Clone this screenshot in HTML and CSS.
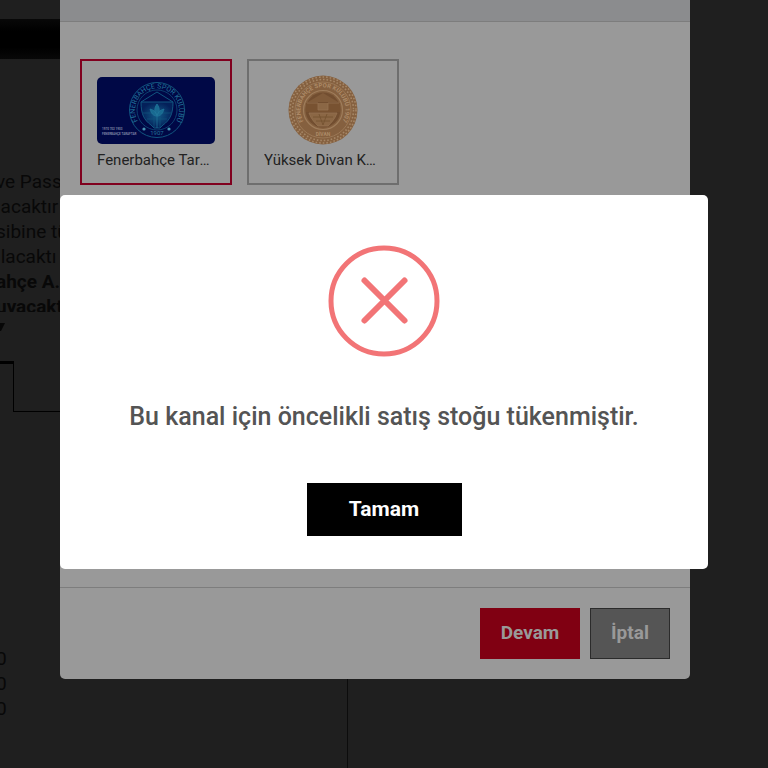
FILE: index.html
```html
<!DOCTYPE html>
<html lang="tr">
<head>
<meta charset="utf-8">
<meta name="viewport" content="width=device-width, initial-scale=1">
<title>Fenerbahçe Kart</title>
<link rel="stylesheet" href="styles.css">
</head>
<body>
<main class="page">
  <div class="page-bar"></div>
  <div class="page-text">
    <p>ve Pass<br>lacaktır<br>sibine tü<br>ılacaktı<br><b>ahçe A.<br>uyacakt</b></p>
  </div>
  <div class="page-tabs">
    <svg class="caret" width="6" height="10" viewBox="0 0 6 10"><path d="M0 1h5L1 9H0z" fill="#070707"/></svg>
    <div class="tab-row"><div class="tab-active"></div><div class="tab-rest"></div></div>
  </div>
  <div class="page-columns">
    <div class="values">0<br>0<br>0</div>
  </div>
</main>

<section class="modal" aria-label="Kart seçimi">
  <header class="modal-head"></header>
  <div class="modal-body">
    <button class="card selected" type="button">
      <svg class="card-art" viewBox="0 0 118 67">
        <defs>
          <path id="ringTop" d="M44 48.500A22 22 0 1 1 76 48.500"/>
          <radialGradient id="glow"><stop offset="0" stop-color="#125c88"/><stop offset="1" stop-color="#04205a"/></radialGradient>
        </defs>
        <rect width="118" height="67" rx="5" fill="#000846"/>
        <g fill="none" stroke="#115680">
          <circle cx="60" cy="33" r="27.500"/>
          <circle cx="60" cy="33" r="20" stroke-width=".7"/>
          <path d="M44 25L60 15L76 25"/>
          <path d="M44 25h32c0 12-3 18-10 23l-3 3h-6l-3-3c-7-5-10-11-10-23z" fill="url(#glow)"/>
          <path d="M46 36h28M50 42h20M57 40v10M63 40v10" stroke-width=".7"/>
          <path d="M60 27c3 4 3 8 0 11c-3-3-3-7 0-11zM60 39c-4 0-6-3-7-7c4 1 6 3 7 7c1-4 3-6 7-7c-1 4-3 7-7 7zM60 39v12" stroke="#22789c" fill="#196a91" stroke-width=".7"/>
        </g>
        <g fill="#22749a" font-family="Roboto, sans-serif" font-size="7">
          <text><textPath href="#ringTop" startOffset="50%" text-anchor="middle">FENERBAHÇE SPOR KULÜBÜ</textPath></text>
          <text x="60" y="58" text-anchor="middle" font-size="6">1907</text>
        </g>
        <circle cx="47" cy="52" r="1.600" fill="#4694b3"/><circle cx="72" cy="52" r="1.600" fill="#4694b3"/>
        <g fill="#7f83a4" font-family="Roboto, sans-serif" font-weight="700" font-size="3">
          <text x="5" y="53">1970 702 1903</text><text x="5" y="58">FENERBAHÇE TARAFTAR</text>
        </g>
      </svg>
      <span class="card-name">Fenerbahçe Taraftar Kart</span>
    </button>
    <button class="card" type="button">
      <svg class="card-art seal" viewBox="0 0 70 70">
        <defs><path id="sealTop" d="M18 49.500A22.500 22.500 0 1 1 52 49.500"/></defs>
        <circle cx="35" cy="35" r="34.500" fill="#85603f"/>
        <g fill="none" stroke="#a58666" stroke-width="1.600">
          <circle cx="35" cy="35" r="33" stroke-dasharray="1.600 2"/>
          <circle cx="35" cy="35" r="30.500" stroke-dasharray="1.600 1.900"/>
          <circle cx="35" cy="35" r="28" stroke="#9b7856" stroke-width="1"/>
          <circle cx="35" cy="35" r="19.500" stroke="#9f7d5b" stroke-width="1.200"/>
        </g>
        <circle cx="35" cy="35" r="17.500" fill="#724e30"/>
        <path d="M35 18L50 27H20z" fill="#805b3a"/>
        <path d="M18 28h34v9H18z" fill="#785231"/>
        <path d="M19 28h11v7h10v-7h11M21 38h28c-2 6-6 10-9 13H30c-3-3-7-7-9-13z" fill="#8b6745" stroke="#967250" stroke-width=".800"/>
        <path d="M25 42h20M28 46h14M31 39l4 11l4-11" fill="none" stroke="#72502f" stroke-width=".800"/>
        <g fill="#ad8b68" font-family="Roboto, sans-serif" font-weight="700" font-size="6">
          <text><textPath href="#sealTop" startOffset="50%" text-anchor="middle">FENERBAHÇE SPOR KULÜBÜ 1907</textPath></text>
          <text x="35" y="61" text-anchor="middle" font-size="5">DİVAN</text>
        </g>
      </svg>
      <span class="card-name">Yüksek Divan Kurulu Kartı</span>
    </button>
  </div>
  <footer class="modal-foot">
    <button class="btn btn-primary" type="button">Devam</button>
    <button class="btn btn-cancel" type="button">İptal</button>
  </footer>
</section>

<div class="alert-layer">
  <section class="alert" role="alertdialog" aria-labelledby="msg">
    <svg class="alert-icon" viewBox="0 0 112 112" fill="none" stroke="#f27476">
      <circle cx="56" cy="56" r="53" stroke-width="5"/>
      <path d="M36.500 35.500L76.500 75.500M76.500 35.500L36.500 75.500" stroke-width="6" stroke-linecap="round"/>
    </svg>
    <h2 id="msg">Bu kanal için öncelikli satış stoğu tükenmiştir.</h2>
    <button class="ok" type="button">Tamam</button>
  </section>
</div>
</body>
</html>
```
FILE: styles.css
```css
* { box-sizing: border-box; }

body {
  margin: 0;
  height: 100vh;
  overflow: hidden;
  position: relative;
  background: #1f1f1f;
  font-family: Roboto, "Liberation Sans", sans-serif;
}

button { font-family: inherit; cursor: pointer; }

/* Dimmed page underneath */
.page {
  height: 100vh;
  overflow: hidden;
  display: flex;
  flex-direction: column;
  color: #080808;
  font-size: 19px;
  line-height: 25px;
}

.page-bar {
  flex: none;
  height: 40px;
  margin-top: 19px;
  width: 60px;
  background: linear-gradient(#080808, #000 30%, #000 70%, #080808);
}

.page-text {
  flex: none;
  height: 143px;
  margin-top: 110px;
  margin-left: -4px;
  width: 64px;
  overflow: hidden;
  white-space: nowrap;
}

.page-text p { margin: 0; }
.page-text b { font-weight: 700; }

.page-tabs { flex: none; padding-top: 10px; width: 60px; }
.caret { display: block; }

.tab-row { display: flex; height: 51px; margin-top: 29px; }

.tab-active {
  width: 14px;
  border-top: 3px solid #000;
  border-right: 1px solid #000;
}

.tab-rest { flex: 1; border-bottom: 1px solid #000; }

.page-columns {
  flex: 1;
  width: 348px;
  border-right: 1px solid #0c0c0c;
  padding-top: 234px;
}

.values { margin-left: -4px; }

/* Card selection modal */
.modal {
  position: absolute;
  top: 0;
  left: 60px;
  right: 78px;
  background: #999;
  border-radius: 0 0 5px 5px;
  overflow: hidden;
}

.modal-head {
  height: 22px;
  background: #8b8c8e;
  border-bottom: 1px solid #7d7d7d;
}

.modal-body {
  display: flex;
  align-items: flex-start;
  gap: 15px;
  min-height: 565px;
  padding: 37px 20px;
}

.card {
  display: flex;
  flex-direction: column;
  align-items: center;
  gap: 6px;
  width: 152px;
  height: 126px;
  padding: 16px 15px;
  border: 2px solid #6e6e6e;
  background: transparent;
  color: #222;
}

.card.selected { border-color: #80001e; }

.card-art { flex: none; width: 118px; height: 67px; }
.seal { width: 70px; height: 70px; margin: -2px 0 -1px; }

.card-name {
  width: 100%;
  overflow: hidden;
  text-overflow: ellipsis;
  white-space: nowrap;
  text-align: left;
  font-size: 15px;
  line-height: 20px;
}

.modal-foot {
  display: flex;
  justify-content: flex-end;
  gap: 10px;
  padding: 20px;
  border-top: 1px solid #7d7d7d;
}

.btn {
  height: 51px;
  padding: 0 16px 2px;
  border: 1px solid transparent;
  color: #999;
  font-size: 19px;
  font-weight: 700;
}

.btn-primary { background: #800012; min-width: 100px; }
.btn-cancel { background: #555; border-color: #2b2b2b; min-width: 80px; }

/* Alert dialog */
.alert-layer {
  position: fixed;
  inset: 0;
  display: flex;
  justify-content: center;
  align-items: flex-start;
  padding: 195px 60px 0;
}

.alert {
  display: flex;
  flex-direction: column;
  align-items: center;
  width: 100%;
  padding: 50px 20px 33px;
  background: #fff;
  border-radius: 5px;
}

.alert-icon { width: 112px; height: 112px; }

.alert h2 {
  margin: 43px 0 49px;
  color: #545454;
  font-size: 25px;
  font-weight: 500;
  line-height: 34px;
  text-align: center;
}

.ok {
  width: 155px;
  height: 53px;
  padding: 0 16px 2px;
  border: 0;
  background: #000;
  color: #fff;
  font-size: 21px;
  font-weight: 700;
}
```
